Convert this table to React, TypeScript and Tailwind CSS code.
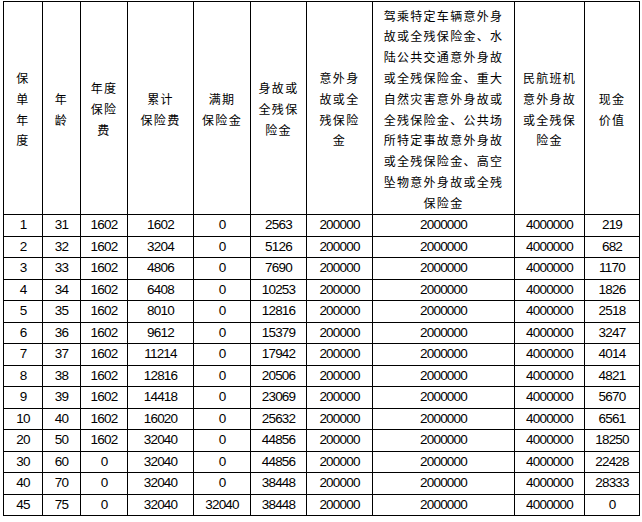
import React from 'react';

const rows: (string | number)[][] = [
  [1, 31, 1602, 1602, 0, 2563, 200000, 2000000, 4000000, 219],
  [2, 32, 1602, 3204, 0, 5126, 200000, 2000000, 4000000, 682],
  [3, 33, 1602, 4806, 0, 7690, 200000, 2000000, 4000000, 1170],
  [4, 34, 1602, 6408, 0, 10253, 200000, 2000000, 4000000, 1826],
  [5, 35, 1602, 8010, 0, 12816, 200000, 2000000, 4000000, 2518],
  [6, 36, 1602, 9612, 0, 15379, 200000, 2000000, 4000000, 3247],
  [7, 37, 1602, 11214, 0, 17942, 200000, 2000000, 4000000, 4014],
  [8, 38, 1602, 12816, 0, 20506, 200000, 2000000, 4000000, 4821],
  [9, 39, 1602, 14418, 0, 23069, 200000, 2000000, 4000000, 5670],
  [10, 40, 1602, 16020, 0, 25632, 200000, 2000000, 4000000, 6561],
  [20, 50, 1602, 32040, 0, 44856, 200000, 2000000, 4000000, 18250],
  [30, 60, 0, 32040, 0, 44856, 200000, 2000000, 4000000, 22428],
  [40, 70, 0, 32040, 0, 38448, 200000, 2000000, 4000000, 28333],
  [45, 75, 0, 32040, 32040, 38448, 200000, 2000000, 4000000, 0],
];

// header labels, one entry per printed line
const headers: string[][] = [
  ['保', '单', '年', '度'],
  ['年', '龄'],
  ['年度', '保险', '费'],
  ['累计', '保险费'],
  ['满期', '保险金'],
  ['身故或', '全残保', '险金'],
  ['意外身', '故或全', '残保险', '金'],
  [
    '驾乘特定车辆意外身',
    '故或全残保险金、水',
    '陆公共交通意外身故',
    '或全残保险金、重大',
    '自然灾害意外身故或',
    '全残保险金、公共场',
    '所特定事故意外身故',
    '或全残保险金、高空',
    '坠物意外身故或全残',
    '保险金',
  ],
  ['民航班机', '意外身故', '或全残保', '险金'],
  ['现金', '价值'],
];

const widths = ['w-[39px]', 'w-[38px]', 'w-[47px]', 'w-[66px]', 'w-[57px]', 'w-[56px]', 'w-[66px]', 'w-[142px]', 'w-[70px]', 'w-[55px]'];

export default function App() {
  return (
    <div className="bg-white w-[642px] h-[522px] pl-[3px] pt-[1px]">
      <table className="table-fixed border-collapse w-[636px] text-black">
        <colgroup>
          {widths.map((w, i) => (
            <col key={i} className={w} />
          ))}
        </colgroup>
        <thead>
          <tr className="h-[213px]">
            {headers.map((lines, i) => (
              <th
                key={i}
                className="border border-black p-0 pt-[3px] align-middle text-center font-normal text-[12px] leading-[20.8px] tracking-[1.3px] font-['Noto_Sans_CJK_SC',sans-serif]"
              >
                {lines.map((l, j) => (
                  <div key={j} className="whitespace-nowrap">{l}</div>
                ))}
              </th>
            ))}
          </tr>
        </thead>
        <tbody>
          {rows.map((r, i) => (
            <tr key={i} className="h-[21.5px]">
              {r.map((v, j) => (
                <td
                  key={j}
                  className="border border-black p-0 text-center align-middle text-[13.5px] leading-[20px] tracking-[-0.8px] font-['Liberation_Sans',Arial,sans-serif]"
                >
                  {v}
                </td>
              ))}
            </tr>
          ))}
        </tbody>
      </table>
    </div>
  );
}
